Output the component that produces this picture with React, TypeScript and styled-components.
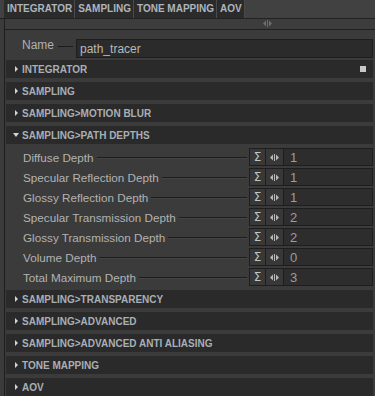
import React from 'react';
import styled, {createGlobalStyle} from "styled-components";

const GlobalStyle = createGlobalStyle`
  html, body {
    margin: 0;
    padding: 0;
    background: #3b3b3b;
  }
`

type Param = {
    label: string,
    value: number
}

const depths: Param[] = [
    {label: "Diffuse Depth", value: 1},
    {label: "Specular Reflection Depth", value: 1},
    {label: "Glossy Reflection Depth", value: 1},
    {label: "Specular Transmission Depth", value: 2},
    {label: "Glossy Transmission Depth", value: 2},
    {label: "Volume Depth", value: 0},
    {label: "Total Maximum Depth", value: 3},
]

const after = [
    "SAMPLING>TRANSPARENCY",
    "SAMPLING>ADVANCED",
    "SAMPLING>ADVANCED ANTI ALIASING",
    "TONE MAPPING",
    "AOV",
]

const SplitIcon = ({color}: { color: string }) => (
    <svg width="9" height="7" viewBox="0 0 9 7">
        <polygon points="0,3.5 3,0.5 3,6.5" fill={color}/>
        <rect x="4" y="0" width="1" height="7" fill={color}/>
        <polygon points="6,0.5 9,3.5 6,6.5" fill={color}/>
    </svg>
)

const Arrow = ({open}: { open?: boolean }) => (
    <ArrowBox>
        {open
            ? <svg width="6" height="4" viewBox="0 0 6 4"><polygon points="0,0 6,0 3,4" fill="#d4d4d4"/></svg>
            : <svg width="3" height="6" viewBox="0 0 3 6"><polygon points="0,0 3,3 0,6" fill="#d4d4d4"/></svg>}
    </ArrowBox>
)

const Section = (props: { title: string, open?: boolean, square?: boolean }) => (
    <Header>
        <Arrow open={props.open}/>
        <HeaderTitle>{props.title}</HeaderTitle>
        {props.square && <Square/>}
    </Header>
)

export default function App() {
    return (
        <Window>
            <GlobalStyle/>
            <TabBar>
                <Tab>INTEGRATOR</Tab>
                <Tab>SAMPLING</Tab>
                <Tab>TONE MAPPING</Tab>
                <Tab>AOV</Tab>
            </TabBar>
            <Splitter>
                <SplitIcon color="#6c6c6c"/>
            </Splitter>
            <Panel>
                <NameRow>
                    <NameLabel>Name</NameLabel>
                    <Dash/>
                    <NameInput>path_tracer</NameInput>
                </NameRow>
                <Sections>
                    <Section title="INTEGRATOR" square/>
                    <Section title="SAMPLING"/>
                    <Section title="SAMPLING>MOTION BLUR"/>
                    <Section title="SAMPLING>PATH DEPTHS" open/>
                    <Params>
                        {depths.map(p => (
                            <ParamRow key={p.label}>
                                <ParamLabel>{p.label}</ParamLabel>
                                <Leader/>
                                <SigmaBox>Σ</SigmaBox>
                                <DragBox><SplitIcon color="#b8b8b8"/></DragBox>
                                <ValueBox>{p.value}</ValueBox>
                            </ParamRow>
                        ))}
                    </Params>
                    {after.map(t => <Section key={t} title={t}/>)}
                </Sections>
            </Panel>
        </Window>
    );
}

const Window = styled.div`
  width: 375px;
  height: 396px;
  overflow: hidden;
  background: #3b3b3b;
  display: flex;
  flex-direction: column;
  font-family: "Liberation Sans", Arial, sans-serif;
`

const TabBar = styled.div`
  height: 19px;
  display: flex;
  padding-left: 4px;
  background: #414141;
  border-bottom: 1px solid #222;
`

const Tab = styled.div`
  display: flex;
  align-items: center;
  padding: 0 2px 0 3px;
  background: #2b2b2b;
  border-right: 1px solid #4a4a4a;
  color: #aeb5bc;
  font-size: 10px;
  font-weight: bold;
`

const Splitter = styled.div`
  height: 11px;
  margin-left: 4px;
  border-left: 1px solid #1e1e1e;
  border-bottom: 1px solid #202020;
  background: #3d3d3d;
  display: flex;
  align-items: center;
  padding-left: 258px;
`

const Panel = styled.div`
  flex: 1;
  margin-left: 4px;
  border-left: 1px solid #1e1e1e;
  padding: 0 2px 0 1px;
  display: flex;
  flex-direction: column;
`

const NameRow = styled.div`
  height: 30px;
  display: flex;
  align-items: center;
  padding-left: 16px;
`

const NameLabel = styled.span`
  color: #b0b0b0;
  font-size: 12px;
`

const Dash = styled.div`
  width: 15px;
  height: 0;
  border-top: 1px solid #1c1c1c;
  margin: 2px 3px 0 4px;
`

const NameInput = styled.div`
  flex: 1;
  height: 19px;
  margin-top: 7px;
  box-sizing: border-box;
  background: #2b2b2b;
  border: 1px solid #1e1e1e;
  color: #b8b8b8;
  font-size: 12px;
  display: flex;
  align-items: center;
  padding-left: 3px;
`

const Sections = styled.div`
  display: flex;
  flex-direction: column;
  gap: 4px;
`

const Header = styled.div`
  height: 18px;
  background: #2a2a2a;
  display: flex;
  align-items: center;
  padding-left: 7px;
  padding-right: 7px;
`

const ArrowBox = styled.div`
  width: 6px;
  display: flex;
  align-items: center;
  justify-content: center;
  margin-right: 3px;
`

const HeaderTitle = styled.span`
  flex: 1;
  color: #a9afb6;
  font-size: 10px;
  font-weight: bold;
`

const Square = styled.div`
  width: 6px;
  height: 6px;
  background: #c8c8c8;
`

const Params = styled.div`
  display: flex;
  flex-direction: column;
  gap: 2px;
  padding: 0 0 0 17px;
`

const ParamRow = styled.div`
  height: 18px;
  display: flex;
  align-items: center;
`

const ParamLabel = styled.span`
  color: #b2b2b2;
  font-size: 11.7px;
  white-space: nowrap;
`

const Leader = styled.div`
  flex: 1;
  height: 0;
  border-top: 1px solid #1c1c1c;
  border-bottom: 1px solid #454545;
  margin: 1px 2px 0 3px;
`

const Cell = styled.div`
  height: 18px;
  box-sizing: border-box;
  display: flex;
  align-items: center;
  justify-content: center;
  border: 1px solid #1e1e1e;
`

const SigmaBox = styled(Cell)`
  width: 17px;
  background: #383838;
  color: #c4c4c4;
  font-size: 12px;
  font-family: "DejaVu Sans", sans-serif;
`

const DragBox = styled(Cell)`
  width: 18px;
  border-left: none;
  background: #383838;
`

const ValueBox = styled(Cell)`
  width: 89px;
  border-left: none;
  justify-content: flex-start;
  padding-left: 6px;
  background: #2d2d2d;
  color: #9c9c9c;
  font-size: 13px;
`
